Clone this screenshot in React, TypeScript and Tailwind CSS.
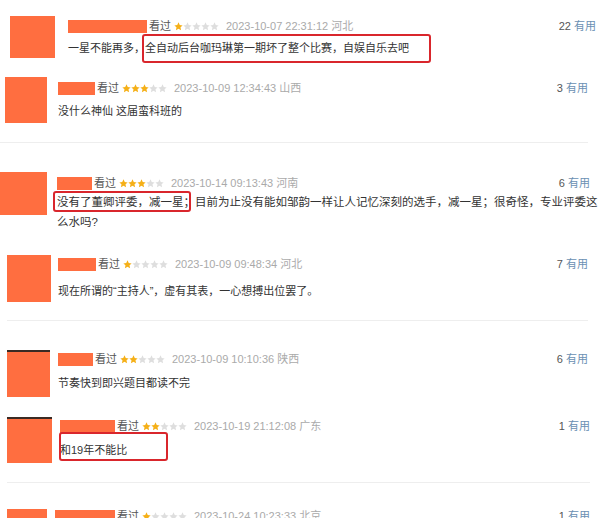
import type { ReactNode } from "react"

// redacted comment list, douban style
interface Comment {
  id: number
  row: string
  avatar: string
  body: string
  name: string
  stars: number
  date: string
  useful: number
  gap: string
  text: ReactNode
  textCls?: string
}

const Marked = ({ children, box }: { children: ReactNode; box: string }) => (
  <span className="relative">
    {children}
    <span className={`absolute border-2 border-[#d9262c] rounded-[3px] ${box}`} />
  </span>
)

const comments: Comment[] = [
  {
    id: 1,
    row: "h-[70px]",
    avatar: "ml-[10px] mt-[16px] w-[45px] h-[42px]",
    body: "ml-[13px] mt-[18px] pr-[4px]",
    name: "w-[79px]",
    stars: 1,
    date: "2023-10-07 22:31:12 河北",
    useful: 22,
    gap: "mt-[6px]",
    text: (
      <>
        一星不能再多，
        <Marked box="-left-[3px] -right-[22px] -top-[8px] -bottom-[9px]">
          全自动后台咖玛琳第一期坏了整个比赛，自娱自乐去吧
        </Marked>
      </>
    ),
  },
  {
    id: 2,
    row: "h-[72px]",
    avatar: "ml-[5px] mt-[7px] w-[42px] h-[46px]",
    body: "ml-[11px] mt-[10px] pr-[12px]",
    name: "w-[37px]",
    stars: 3,
    date: "2023-10-09 12:34:43 山西",
    useful: 3,
    gap: "mt-[7px]",
    text: "没什么神仙 这届蛮科班的",
  },
  {
    id: 3,
    row: "h-[102px]",
    avatar: "ml-0 mt-[29px] w-[47px] h-[43px]",
    body: "ml-[10px] mt-[32px] pr-[10px]",
    name: "w-[35px]",
    stars: 3,
    date: "2023-10-14 09:13:43 河南",
    useful: 6,
    gap: "mt-px",
    textCls: "text-[11.5px] leading-[20px] -mr-[8px]",
    text: (
      <>
        <Marked box="-left-[4px] right-[4px] -top-[5px] -bottom-[4px]">
          没有了董卿评委，减一星；
        </Marked>
        目前为止没有能如邹韵一样让人记忆深刻的选手，减一星；很奇怪，专业评委这么水吗?
      </>
    ),
  },
  {
    id: 4,
    row: "h-[75px]",
    avatar: "ml-[7px] mt-[10px] w-[44px] h-[47px]",
    body: "ml-[7px] mt-[11px] pr-[12px]",
    name: "w-[38px]",
    stars: 1,
    date: "2023-10-09 09:48:34 河北",
    useful: 7,
    gap: "mt-[11px]",
    text: "现在所谓的“主持人”，虚有其表，一心想搏出位罢了。",
  },
  {
    id: 5,
    row: "h-[89px]",
    avatar: "ml-[7px] mt-[29px] w-[43px] h-[47px] border-t-2 border-[#3a2a24]",
    body: "ml-[8px] mt-[30px] pr-[12px]",
    name: "w-[35px]",
    stars: 2,
    date: "2023-10-09 10:10:36 陕西",
    useful: 6,
    gap: "mt-[8px]",
    text: "节奏快到即兴题目都读不完",
  },
  {
    id: 6,
    row: "h-[72px]",
    avatar: "ml-[7px] mt-[7px] w-[45px] h-[46px] border-t-2 border-[#3a2a24]",
    body: "ml-[8px] mt-[8px] pr-[10px]",
    name: "w-[55px]",
    stars: 2,
    date: "2023-10-19 21:12:08 广东",
    useful: 1,
    gap: "mt-[8px]",
    text: (
      <Marked box="-left-[1px] -right-[41px] -top-[12px] -bottom-[5px]">和19年不能比</Marked>
    ),
  },
  {
    id: 7,
    row: "h-[40px]",
    avatar: "ml-[7px] mt-[26px] w-[40px] h-[40px]",
    body: "ml-[8px] mt-[25px] pr-[10px]",
    name: "w-[60px]",
    stars: 1,
    date: "2023-10-24 10:23:33 北京",
    useful: 1,
    gap: "mt-[8px]",
    text: "",
  },
]

const dividers: Record<number, string> = {
  2: "ml-0 mr-[12px]",
  4: "ml-[7px] mr-[12px]",
  6: "ml-[7px] mr-[10px]",
}

const Stars = ({ n }: { n: number }) => (
  <span className="flex items-center ml-[3px]">
    {[0, 1, 2, 3, 4].map((i) => (
      <svg key={i} viewBox="0 0 10 10" className="w-[9px] h-[9px]">
        <path
          d="M5 .4l1.4 2.95 3.2.4-2.35 2.2.6 3.2L5 7.55 2.15 9.15l.6-3.2L.4 3.75l3.2-.4z"
          fill={i < n ? "#f5b018" : "#dedede"}
        />
      </svg>
    ))}
  </span>
)

export default function App() {
  return (
    <div className="w-[600px] h-[518px] overflow-hidden bg-white font-['Liberation_Sans','Noto_Sans_CJK_SC',sans-serif] text-[11px]">
      {comments.map((c) => (
        <div key={c.id}>
          <div className={`flex ${c.row}`}>
            <div className={`shrink-0 bg-[#ff6e40] ${c.avatar}`} />
            <div className={`flex-1 min-w-0 ${c.body}`}>
              <div className="flex items-center h-[16px] leading-[16px]">
                <span className={`h-[13px] bg-[#ff6e40] ${c.name}`} />
                <span className="ml-[2px] text-[#555]">看过</span>
                <Stars n={c.stars} />
                <span className="ml-[7px] text-[#aaa]">{c.date}</span>
                <span className="ml-auto text-[#555]">
                  {c.useful} <span className="text-[#6a90b3]">有用</span>
                </span>
              </div>
              <p className={`${c.gap} text-[#333] ${c.textCls ?? "leading-[16px]"}`}>{c.text}</p>
            </div>
          </div>
          {dividers[c.id] && <div className={`h-px bg-[#eeeeee] ${dividers[c.id]}`} />}
        </div>
      ))}
    </div>
  )
}
